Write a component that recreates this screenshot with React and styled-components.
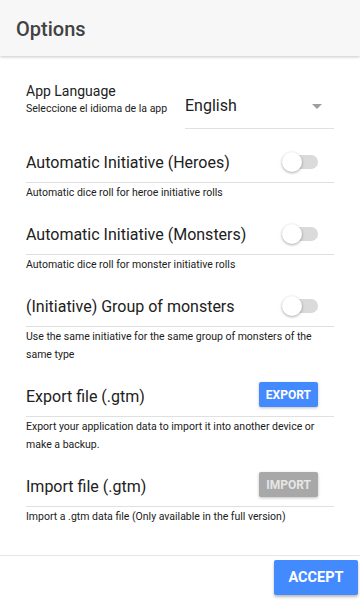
import React, { useState } from "react";
import styled, { createGlobalStyle } from "styled-components";

const GlobalStyle = createGlobalStyle`
  html, body {
    margin: 0;
    padding: 0;
    background: #fff;
  }
  * {
    box-sizing: border-box;
  }
`;

const Page = styled.div`
  width: 360px;
  height: 600px;
  display: flex;
  flex-direction: column;
  font-family: Roboto, "Liberation Sans", sans-serif;
  color: #212121;
  background: #fff;
  overflow: hidden;
`;

const Header = styled.div`
  height: 56px;
  flex: none;
  display: flex;
  align-items: center;
  padding: 1px 16px 0;
  background: #f7f7f7;
  box-shadow: 0 1px 3px rgba(0, 0, 0, 0.22);
  position: relative;
  z-index: 1;
`;

const Title = styled.h1`
  margin: 0;
  font-size: 20px;
  font-weight: 500;
  color: #424242;
`;

const Body = styled.div`
  flex: 1;
  padding: 26px 26px 0;
`;

const LangRow = styled.div`
  display: flex;
  align-items: flex-start;
  justify-content: space-between;
  margin-bottom: 13px;
`;

const LangText = styled.div`
  display: flex;
  flex-direction: column;
`;

const LangLabel = styled.div`
  font-size: 14px;
  line-height: 19px;
`;

const LangSub = styled.div`
  font-size: 10.5px;
  line-height: 16px;
`;

const Select = styled.div`
  width: 149px;
  margin-top: 10px;
  padding: 4px 0 12px;
  display: flex;
  align-items: center;
  justify-content: space-between;
  border-bottom: 1px solid #e0e0e0;
  font-size: 16px;
  line-height: 20px;
`;

const Caret = styled.span`
  width: 0;
  height: 0;
  margin-right: 12px;
  border-left: 5px solid transparent;
  border-right: 5px solid transparent;
  border-top: 5px solid #9e9e9e;
`;

const Section = styled.div`
  margin-bottom: 12px;
`;

const Row = styled.div`
  height: 41px;
  display: flex;
  align-items: center;
  justify-content: space-between;
  border-bottom: 1px solid #e0e0e0;
  padding-right: 16px;
`;

const RowTitle = styled.div`
  font-size: 16px;
  padding-top: 1px;
`;

const Desc = styled.div`
  padding-top: 1px;
  font-size: 10.5px;
  line-height: 18px;
`;

const Track = styled.button`
  position: relative;
  width: 34px;
  height: 14px;
  padding: 0;
  border: none;
  border-radius: 7px;
  background: ${(p) => (p.$on ? "#9dbfff" : "#dadada")};
  cursor: pointer;
`;

const Thumb = styled.span`
  position: absolute;
  top: -3px;
  left: ${(p) => (p.$on ? "16px" : "-2px")};
  width: 20px;
  height: 20px;
  border-radius: 50%;
  background: ${(p) => (p.$on ? "#448aff" : "#fff")};
  box-shadow: 0 1px 3px rgba(0, 0, 0, 0.35);
`;

const ActionButton = styled.button`
  height: 25px;
  margin-bottom: 3px;
  padding: 0 7px;
  border: none;
  border-radius: 2px;
  background: ${(p) => (p.$disabled ? "#a8a8a8" : "#448aff")};
  color: ${(p) => (p.$disabled ? "#e6e6e6" : "#fff")};
  font-family: Roboto, "Liberation Sans", sans-serif;
  font-size: 12px;
  font-weight: 700;
  box-shadow: 0 1px 3px rgba(0, 0, 0, 0.25);
`;

const Footer = styled.div`
  height: 45px;
  flex: none;
  display: flex;
  justify-content: flex-end;
  padding: 4px 2px 5px;
  border-top: 1px solid #e6e6e6;
`;

const AcceptButton = styled.button`
  width: 84px;
  height: 35px;
  border: none;
  border-radius: 2px;
  background: #448aff;
  color: #fff;
  font-family: Roboto, "Liberation Sans", sans-serif;
  font-size: 14.5px;
  font-weight: 700;
  box-shadow: 0 2px 3px rgba(0, 0, 0, 0.28);
`;

const Toggle = ({ on, onClick }) => (
  <Track $on={on} onClick={onClick}>
    <Thumb $on={on} />
  </Track>
);

const App = () => {
  const [flags, setFlags] = useState({ heroes: false, monsters: false, group: false });
  const flip = (k) => setFlags((f) => ({ ...f, [k]: !f[k] }));

  return (
    <Page>
      <GlobalStyle />
      <Header>
        <Title>Options</Title>
      </Header>
      <Body>
        <LangRow>
          <LangText>
            <LangLabel>App Language</LangLabel>
            <LangSub>Seleccione el idioma de la app</LangSub>
          </LangText>
          <Select>
            English
            <Caret />
          </Select>
        </LangRow>

        <Section>
          <Row>
            <RowTitle>Automatic Initiative (Heroes)</RowTitle>
            <Toggle on={flags.heroes} onClick={() => flip("heroes")} />
          </Row>
          <Desc>Automatic dice roll for heroe initiative rolls</Desc>
        </Section>

        <Section>
          <Row>
            <RowTitle>Automatic Initiative (Monsters)</RowTitle>
            <Toggle on={flags.monsters} onClick={() => flip("monsters")} />
          </Row>
          <Desc>Automatic dice roll for monster initiative rolls</Desc>
        </Section>

        <Section>
          <Row>
            <RowTitle>(Initiative) Group of monsters</RowTitle>
            <Toggle on={flags.group} onClick={() => flip("group")} />
          </Row>
          <Desc>Use the same initiative for the same group of monsters of the same type</Desc>
        </Section>

        <Section>
          <Row>
            <RowTitle>Export file (.gtm)</RowTitle>
            <ActionButton>EXPORT</ActionButton>
          </Row>
          <Desc>Export your application data to import it into another device or make a backup.</Desc>
        </Section>

        <Section>
          <Row>
            <RowTitle>Import file (.gtm)</RowTitle>
            <ActionButton $disabled>IMPORT</ActionButton>
          </Row>
          <Desc>Import a .gtm data file (Only available in the full version)</Desc>
        </Section>
      </Body>
      <Footer>
        <AcceptButton>ACCEPT</AcceptButton>
      </Footer>
    </Page>
  );
};

export default App;
